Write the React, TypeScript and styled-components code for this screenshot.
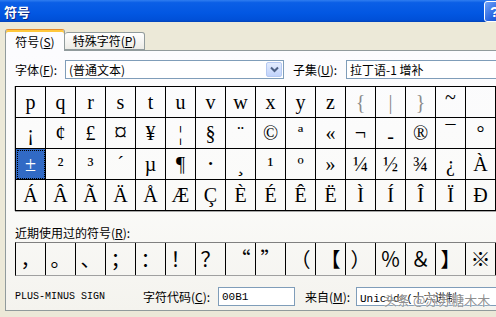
import React from 'react';
import styled, { createGlobalStyle } from 'styled-components';

const GlobalStyle = createGlobalStyle`
  html, body {
    margin: 0;
    padding: 0;
    overflow: hidden;
    background: #ECE9D8;
  }
  body {
    width: 496px;
    height: 317px;
    font-family: "Noto Sans CJK SC", sans-serif;
    font-size: 12px;
    color: #000;
  }
`;

const Dialog = styled.div`
  position: relative;
  width: 508px;
  height: 317px;
  display: flex;
  flex-direction: column;
  background: #ECE9D8;
`;

const TitleBar = styled.div`
  flex: none;
  height: 22px;
  display: flex;
  align-items: center;
  justify-content: space-between;
  padding: 0 3px 0 4px;
  background: linear-gradient(#2F7DF0 0%, #0B5FE6 12%, #0257E2 60%, #0050D8 90%, #0343B8 100%);
`;

const Title = styled.span`
  color: #fff;
  font-weight: bold;
  font-size: 13px;
  line-height: 1;
  text-shadow: 1px 1px 0 #0A2A8A;
`;

const HelpButton = styled.div`
  width: 21px;
  height: 21px;
  box-sizing: border-box;
  border: 1px solid #fff;
  border-radius: 3px;
  background: linear-gradient(135deg, #6FA3F8 0%, #2663E0 60%, #1B4FC8 100%);
  color: #fff;
  font-family: "Liberation Sans", sans-serif;
  font-weight: bold;
  font-size: 15px;
  line-height: 19px;
  text-align: center;
`;

const Body = styled.div`
  flex: 1;
  display: flex;
  flex-direction: column;
  padding: 7px 0 0 5px;
`;

const TabRow = styled.div`
  display: flex;
  align-items: flex-end;
  height: 21px;
  position: relative;
  z-index: 1;
`;

const Tab = styled.div<{ $active?: boolean; $width: number }>`
  box-sizing: border-box;
  width: ${p => p.$width}px;
  height: ${p => (p.$active ? 22 : 18)}px;
  margin-bottom: ${p => (p.$active ? -1 : 0)}px;
  display: flex;
  align-items: center;
  justify-content: center;
  border: 1px solid #919B9C;
  border-bottom: ${p => (p.$active ? 'none' : '1px solid #919B9C')};
  border-left: ${p => (p.$active ? '1px solid #919B9C' : 'none')};
  border-radius: 3px 3px 0 0;
  background: ${p => (p.$active ? '#FCFCFE' : 'linear-gradient(#FFFFFF, #ECEBE6)')};
  box-shadow: ${p => (p.$active ? 'inset 0 2px 0 #FFC83C' : 'none')};
  border-top: ${p => (p.$active ? '1px solid #E68B2C' : '1px solid #919B9C')};
  padding-top: ${p => (p.$active ? 2 : 0)}px;
  font-size: 12px;
  line-height: 1;
`;

const Panel = styled.div`
  box-sizing: border-box;
  height: 261px;
  border: 1px solid #919B9C;
  border-right: none;
  background: linear-gradient(#FCFCFE 0%, #FAFAF8 60%, #F4F3EE 100%);
  padding: 9px 0 0 9px;
  display: flex;
  flex-direction: column;
`;

const FieldRow = styled.div<{ $top?: number }>`
  display: flex;
  align-items: center;
  height: 19px;
  margin-top: ${p => p.$top ?? 0}px;
`;

const Label = styled.span<{ $width: number; $left?: number }>`
  flex: none;
  width: ${p => p.$width}px;
  margin-left: ${p => p.$left ?? 0}px;
  font-size: 12px;
  line-height: 19px;
  white-space: nowrap;
`;

const TextBox = styled.div<{ $width?: number; $mono?: boolean }>`
  box-sizing: border-box;
  height: 19px;
  ${p => (p.$width ? `width: ${p.$width}px; flex: none;` : 'flex: 1;')}
  border: 1px solid #7F9DB9;
  background: #fff;
  display: flex;
  align-items: center;
  padding-left: 3px;
  font-family: ${p => (p.$mono ? '"Liberation Mono", "Noto Sans CJK SC", monospace' : '"Noto Sans CJK SC", sans-serif')};
  font-size: ${p => (p.$mono ? 11 : 12)}px;
  white-space: nowrap;
  overflow: hidden;
`;

const ComboText = styled.span`
  flex: 1;
`;

const DropButton = styled.div`
  flex: none;
  box-sizing: border-box;
  width: 16px;
  height: 15px;
  margin-right: 1px;
  border: 1px solid #B5C9F2;
  border-radius: 2px;
  background: linear-gradient(#E3ECFE, #C1D3FB);
  display: flex;
  align-items: center;
  justify-content: center;
`;

const Grid = styled.div`
  margin-top: 7px;
  display: grid;
  grid-template-columns: repeat(16, 30px);
  grid-auto-rows: 31px;
  width: max-content;
  border-left: 1px solid #000;
  border-top: 1px solid #000;
  box-shadow: -1px 0 0 #C8C8C8, 0 1px 0 #A8A8A8;
`;

const Cell = styled.div<{ $selected?: boolean; $faint?: boolean; $shift?: number; $size?: number }>`
  box-sizing: border-box;
  border-right: 1px solid #000;
  border-bottom: 1px solid #000;
  display: flex;
  align-items: center;
  justify-content: center;
  overflow: hidden;
  font-family: "Liberation Serif", "DejaVu Serif", serif;
  font-size: ${p => p.$size ?? 20}px;
  line-height: 1;
  color: ${p => (p.$selected ? '#fff' : p.$faint ? '#8A8A8A' : '#000')};
  background: ${p => (p.$selected ? '#316AC5' : 'transparent')};
  outline: ${p => (p.$selected ? '1px dotted #000' : 'none')};
  outline-offset: -2px;

  span {
    display: inline-block;
    transform: translateY(${p => p.$shift ?? 0}px);
  }
`;

const RecentRow = styled.div`
  margin-top: 2px;
  display: grid;
  grid-template-columns: repeat(16, 30px);
  height: 34px;
  width: max-content;
  box-sizing: border-box;
  border-top: 1px solid #808080;
  border-bottom: 1px solid #A0A0A0;
  border-left: 1px solid #000;
`;

const RecentCell = styled.div`
  box-sizing: border-box;
  border-right: 1px solid #000;
  display: flex;
  align-items: center;
  justify-content: center;
  font-family: "Noto Sans CJK SC", sans-serif;
  font-size: 20px;
  line-height: 1;
`;

const SectionLabel = styled.div`
  margin-top: 15px;
  height: 14px;
  font-size: 12px;
  line-height: 14px;
`;

const CharName = styled.span`
  flex: none;
  width: 128px;
  font-family: "Liberation Mono", monospace;
  font-size: 10px;
  line-height: 19px;
`;

const Watermark = styled.div`
  position: absolute;
  left: 384px;
  top: 290px;
  font-family: "Noto Sans CJK SC", sans-serif;
  font-size: 13px;
  color: rgba(70, 70, 70, 0.6);
  text-shadow: 0 0 2px #fff, 0 0 1px #fff;
  white-space: nowrap;
`;

type GlyphCell = { ch: string; faint?: boolean; shift?: number; size?: number; selected?: boolean };

const rows: GlyphCell[][] = [
  [
    { ch: 'p' }, { ch: 'q' }, { ch: 'r' }, { ch: 's' }, { ch: 't' }, { ch: 'u' }, { ch: 'v' }, { ch: 'w' },
    { ch: 'x' }, { ch: 'y' }, { ch: 'z' }, { ch: '{', faint: true }, { ch: '|', faint: true }, { ch: '}', faint: true },
    { ch: '~', shift: -5 }, { ch: '' },
  ],
  [
    { ch: '¡' }, { ch: '¢' }, { ch: '£' }, { ch: '¤', size: 26 }, { ch: '¥' }, { ch: '¦' }, { ch: '§' }, { ch: '¨' },
    { ch: '©' }, { ch: 'ª' }, { ch: '«' }, { ch: '¬' }, { ch: '-', shift: 3 }, { ch: '®' }, { ch: '¯' }, { ch: '°' },
  ],
  [
    { ch: '±', selected: true }, { ch: '²' }, { ch: '³' }, { ch: '´' }, { ch: 'µ' }, { ch: '¶' }, { ch: '·', size: 26 },
    { ch: '¸', shift: 0 }, { ch: '¹' }, { ch: 'º' }, { ch: '»' }, { ch: '¼' }, { ch: '½' }, { ch: '¾' }, { ch: '¿' },
    { ch: 'À' },
  ],
  [
    { ch: 'Á' }, { ch: 'Â' }, { ch: 'Ã' }, { ch: 'Ä' }, { ch: 'Å' }, { ch: 'Æ' }, { ch: 'Ç' }, { ch: 'È' },
    { ch: 'É' }, { ch: 'Ê' }, { ch: 'Ë' }, { ch: 'Ì' }, { ch: 'Í' }, { ch: 'Î' }, { ch: 'Ï' }, { ch: 'Ð' },
  ],
];

const recent = ['，', '。', '、', '；', '：', '！', '？', '“', '”', '（', '【', '）', '％', '＆', '】', '※'];

const Chevron = () => (
  <svg width="9" height="7" viewBox="0 0 9 7">
    <path d="M1 1.5 L4.5 5 L8 1.5" fill="none" stroke="#4D6185" strokeWidth="2" />
  </svg>
);

export default function App() {
  return (
    <>
      <GlobalStyle />
      <Dialog>
        <TitleBar>
          <Title>符号</Title>
          <HelpButton>?</HelpButton>
        </TitleBar>
        <Body>
          <TabRow>
            <Tab $active $width={60}>符号(<u>S</u>)</Tab>
            <Tab $width={80}>特殊字符(<u>P</u>)</Tab>
          </TabRow>
          <Panel>
            <FieldRow>
              <Label $width={50}>字体(<u>F</u>):</Label>
              <TextBox $width={219}>
                <ComboText>(普通文本)</ComboText>
                <DropButton>
                  <Chevron />
                </DropButton>
              </TextBox>
              <Label $width={53} $left={9}>子集(<u>U</u>):</Label>
              <TextBox>拉丁语-1 增补</TextBox>
            </FieldRow>

            <Grid>
              {rows.flat().map((c, i) => (
                <Cell key={i} $selected={c.selected} $faint={c.faint} $shift={c.shift} $size={c.size}>
                  <span>{c.ch}</span>
                </Cell>
              ))}
            </Grid>

            <SectionLabel>近期使用过的符号(<u>R</u>):</SectionLabel>
            <RecentRow>
              {recent.map((ch, i) => (
                <RecentCell key={i}>{ch}</RecentCell>
              ))}
            </RecentRow>

            <FieldRow $top={11}>
              <CharName>PLUS-MINUS SIGN</CharName>
              <Label $width={75}>字符代码(<u>C</u>):</Label>
              <TextBox $width={77} $mono>00B1</TextBox>
              <Label $width={51} $left={10}>来自(<u>M</u>):</Label>
              <TextBox $mono>Unicode(十六进制)</TextBox>
            </FieldRow>
          </Panel>
        </Body>
        <Watermark>头条 @苏苏糖木木</Watermark>
      </Dialog>
    </>
  );
}
